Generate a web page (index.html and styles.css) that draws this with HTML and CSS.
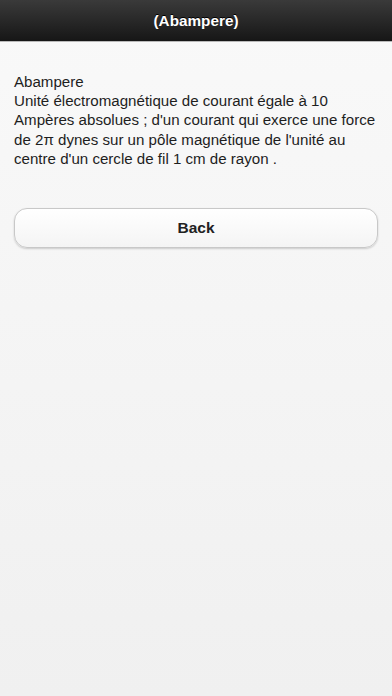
FILE: index.html
```html
<!DOCTYPE html>
<html lang="fr">
<head>
<meta charset="utf-8">
<title>(Abampere)</title>
<link rel="stylesheet" href="styles.css">
</head>
<body>
<header class="bar"><h1 class="title">(Abampere)</h1></header>
<main class="content">
<p class="desc">Abampere<br>Unité électromagnétique de courant égale à 10 Ampères absolues ; d'un courant qui exerce une force de 2π dynes sur un pôle magnétique de l'unité au centre d'un cercle de fil 1 cm de rayon .</p>
<button class="btn" type="button">Back</button>
</main>
</body>
</html>
```
FILE: styles.css
```css
html, body {
  margin: 0;
  padding: 0;
  height: 100%;
}
body {
  font-family: "Liberation Sans", Arial, sans-serif;
  background: linear-gradient(#f9f9f9, #f0f0f0);
  color: #222;
}
.bar {
  height: 41px;
  background: linear-gradient(#3a3a3a 0%, #2a2a2a 45%, #161616 100%);
  border-bottom: 1px solid #b9b9b9;
  display: flex;
  align-items: center;
  justify-content: center;
}
.title {
  margin: 0;
  color: #fff;
  font-size: 15.3px;
  font-weight: bold;
  text-shadow: 0 -1px 0 #000;
}
.content {
  padding: 30px 8px 0 14px;
  display: flex;
  flex-direction: column;
}
.desc {
  margin: 0;
  font-size: 15.1px;
  line-height: 19.2px;
  color: #1e1e1e;
}
.btn {
  margin-top: 40px;
  margin-right: 6px;
  height: 40px;
  border: 1px solid #c8c8c8;
  border-radius: 13px;
  background: linear-gradient(#ffffff, #f4f4f4);
  box-shadow: 0 1px 2px rgba(0,0,0,0.18);
  font-family: "Liberation Sans", Arial, sans-serif;
  font-size: 15.5px;
  font-weight: bold;
  color: #222;
}
```
